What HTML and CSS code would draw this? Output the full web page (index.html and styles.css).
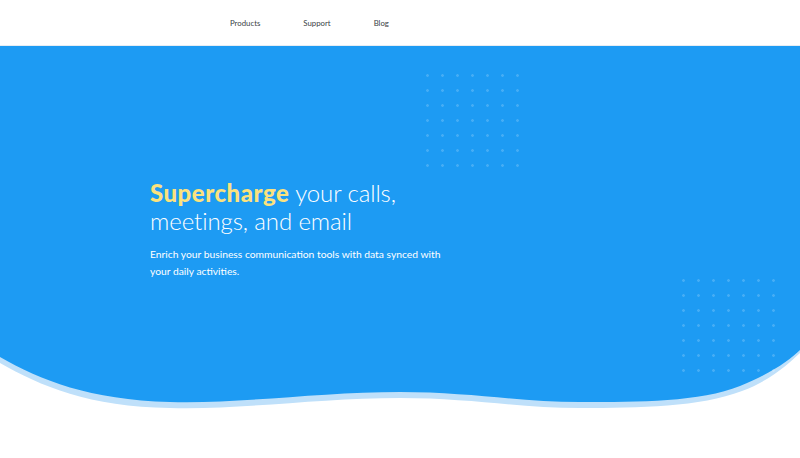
FILE: index.html
```html
<!DOCTYPE html>
<html lang="en">
<head>
<meta charset="utf-8">
<title>Supercharge</title>
<link rel="stylesheet" href="styles.css">
</head>
<body>
<header class="topbar">
  <nav class="nav">
    <a class="nav-link" href="#">Products</a>
    <a class="nav-link" href="#">Support</a>
    <a class="nav-link" href="#">Blog</a>
  </nav>
</header>
<section class="hero">
  <div class="dots dots-top"></div>
  <div class="dots dots-right"></div>
  <div class="hero-content">
    <h1 class="hero-title"><span class="accent">Supercharge</span> your calls,<br>meetings, and email</h1>
    <p class="hero-text">Enrich your business communication tools with data synced with<br>your daily activities.</p>
  </div>
</section>
<svg class="wave" viewBox="0 0 800 70" preserveAspectRatio="none" aria-hidden="true">
  <path class="wave-shadow" d="M0,23 C40,46 90,67 170,68 C240,70 320,58 400,58 C470,58 520,68 580,68 C640,68 700,67 742,51 C772,40 790,22 800,13 V0 H0 Z"/>
  <path class="wave-fill" d="M0,17 C40,40 90,60 170,62 C240,64 320,52 400,52 C470,52 520,62 580,62 C640,62 700,62 740,46 C770,34 790,20 800,10 V0 H0 Z"/>
</svg>
</body>
</html>
```
FILE: styles.css
```css
* { box-sizing: border-box; }
html, body { margin: 0; padding: 0; background: #ffffff; }
body { font-family: "Lato", "Open Sans", sans-serif; overflow: hidden; }

.topbar {
  height: 46px;
  display: flex;
  align-items: center;
  background: #ffffff;
  border-bottom: 1px solid #e6edf3;
}
.nav {
  display: flex;
  gap: 43px;
  padding-left: 230px;
  margin-top: 1px;
}
.nav-link {
  font-size: 7.8px;
  color: #3a3f45;
  text-decoration: none;
}

.hero {
  position: relative;
  height: 294px;
  background: #1d9bf3;
}
.dots {
  position: absolute;
  width: 105px;
  height: 105px;
  background-image: radial-gradient(circle at center, rgba(255,255,255,0.18) 0 1.1px, transparent 1.6px);
  background-size: 15px 15px;
  z-index: 2;
}
.dots-top { left: 420px; top: 22px; }
.dots-right { left: 676px; top: 227px; }

.hero-content {
  padding: 133px 0 0 150px;
}
.hero-title {
  margin: 0;
  font-size: 24px;
  line-height: 28px;
  font-weight: 300;
  color: #ffffff;
  letter-spacing: -0.1px;
}
.accent {
  color: #fbe27e;
  font-weight: 900;
  letter-spacing: 0.5px;
}
.hero-text {
  margin: 11px 0 0;
  font-size: 10.3px;
  line-height: 17px;
  color: #ffffff;
  font-weight: 400;
}

.wave {
  display: block;
  width: 800px;
  height: 70px;
}
.wave-fill { fill: #1d9bf3; }
.wave-shadow { fill: #bfe0fa; }
```
